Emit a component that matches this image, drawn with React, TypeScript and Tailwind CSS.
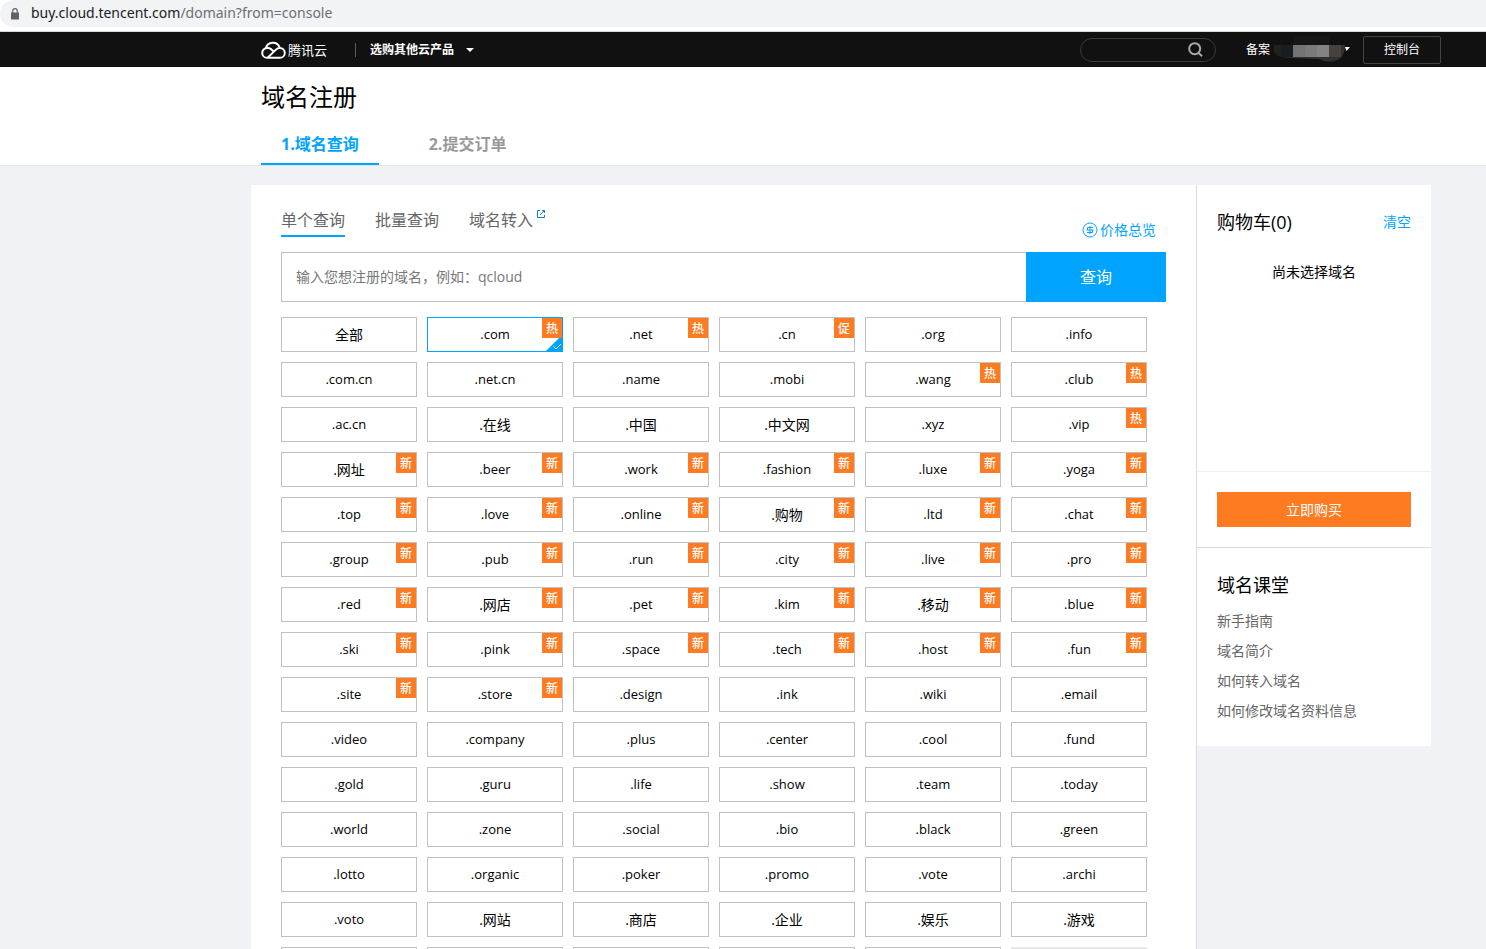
import React, { useState } from "react";

type Tag = "热" | "促" | "新";

const ROWS: string[] = [
  "全部|.com:热|.net:热|.cn:促|.org|.info",
  ".com.cn|.net.cn|.name|.mobi|.wang:热|.club:热",
  ".ac.cn|.在线|.中国|.中文网|.xyz|.vip:热",
  ".网址:新|.beer:新|.work:新|.fashion:新|.luxe:新|.yoga:新",
  ".top:新|.love:新|.online:新|.购物:新|.ltd:新|.chat:新",
  ".group:新|.pub:新|.run:新|.city:新|.live:新|.pro:新",
  ".red:新|.网店:新|.pet:新|.kim:新|.移动:新|.blue:新",
  ".ski:新|.pink:新|.space:新|.tech:新|.host:新|.fun:新",
  ".site:新|.store:新|.design|.ink|.wiki|.email",
  ".video|.company|.plus|.center|.cool|.fund",
  ".gold|.guru|.life|.show|.team|.today",
  ".world|.zone|.social|.bio|.black|.green",
  ".lotto|.organic|.poker|.promo|.vote|.archi",
  ".voto|.网站|.商店|.企业|.娱乐|.游戏",
];

const SUFFIXES = ROWS.flatMap((row) =>
  row.split("|").map((cell) => {
    const [name, tag] = cell.split(":");
    return { name, tag: tag as Tag | undefined };
  }),
);

const LESSONS = ["新手指南", "域名简介", "如何转入域名", "如何修改域名资料信息"];

function AddressBar() {
  return (
    <div className="shrink-0 border-b border-[#d5d8dc] bg-white pb-1">
      <div className="flex h-[27px] items-center rounded-l-full bg-[#f1f3f4] pl-[11px]">
        <svg width="8" height="12" viewBox="0 0 8 12" aria-hidden="true">
          <path d="M0 4.5h8v7H0z" fill="#5f6368" />
          <path d="M1.7 5V3a2.3 2.3 0 0 1 4.6 0v2" fill="none" stroke="#5f6368" strokeWidth="1.2" />
        </svg>
        <span className="ml-3 pb-[2px] font-['Noto_Sans',sans-serif] text-[14px] leading-5 text-[#202124]">
          buy.cloud.tencent.com<span className="text-[#6b6f74]">/domain?from=console</span>
        </span>
      </div>
    </div>
  );
}

function CloudLogo() {
  return (
    <svg width="25" height="18" viewBox="0 0 25 18" fill="none" stroke="#fff" strokeWidth="2" aria-hidden="true">
      <path d="M4.9 7.1A7.2 7.2 0 0 1 18.6 6.3" />
      <path d="M12.6 10.6 9.9 8.1A5 5 0 0 0 6.2 7C3.300 7 1.200 9.200 1.200 11.900S3.300 16.800 6.200 16.800H18.700C21.700 16.800 23.800 14.600 23.800 11.900S21.600 7 18.800 7C17.200 7 16 7.600 15 8.600L6.700 16.600" />
    </svg>
  );
}

function AccountMosaic() {
  return (
    <svg width="72" height="28" viewBox="0 0 72 28" aria-label="账号" role="img">
      <path d="M2 8Q-1 14 4 19Q8 22 20 22L46 23Q56 28 64 24Q73 20 72 8Z" fill="#303030" />
      <path d="M2 0h70v9H2z" fill="#111" />
      <path d="M20 0h36v9H20z" fill="#161616" />
      <path d="M2 9h6v11H5Q0 15 2 9Z" fill="#24211c" />
      <path d="M8 9h12v12H8z" fill="#191d21" />
      <path d="M20 9h12v12H20z" fill="#727474" />
      <path d="M32 9h12v12H32z" fill="#7b7a7b" />
      <path d="M44 9h12v12H44z" fill="#838482" />
      <path d="M56 9h12v12H56z" fill="#49413b" />
    </svg>
  );
}

function TopBar() {
  return (
    <header className="flex h-[35px] items-center bg-[#111] pr-[45px] pl-[261px] text-[12px] text-white">
      <a href="#home" className="flex items-center gap-[2px]">
        <CloudLogo />
        <span className="text-[13px] leading-5">腾讯云</span>
      </a>
      <span className="ml-7 h-[14px] w-px bg-[#5a5a5a]" />
      <button type="button" className="ml-[14px] flex items-center gap-3 font-bold">
        选购其他云产品
        <svg width="8" height="4" viewBox="0 0 8 4" aria-hidden="true">
          <path d="M0 0h8L4 4z" fill="#fff" />
        </svg>
      </button>
      <label className="ml-auto flex h-6 w-[136px] items-center rounded-full border border-[#3a3a3a] pr-3">
        <input aria-label="搜索" className="h-5 w-0 flex-1 bg-transparent pl-3 outline-none" />
        <svg width="15" height="15" viewBox="0 0 15 15" fill="none" stroke="#a9a9a9" strokeWidth="2" aria-hidden="true">
          <circle cx="6.700" cy="6.700" r="5.500" />
          <path d="m10.300 10.600 3.700 3.700" />
        </svg>
      </label>
      <a href="#beian" className="ml-[30px]">备案</a>
      <button type="button" className="ml-[3px] flex items-center" aria-label="账号菜单">
        <AccountMosaic />
        <svg width="5" height="5" viewBox="0 0 5 5" aria-hidden="true">
          <path d="M0 0h5L1.500 4z" fill="#fff" />
        </svg>
      </button>
      <a
        href="#console"
        className="ml-[13px] flex h-7 w-[78px] items-center justify-center rounded-[2px] border border-[#444]"
      >
        控制台
      </a>
    </header>
  );
}

function PageTitle() {
  return (
    <div className="border-b border-[#e2e7ec] bg-white pl-[261px]">
      <h1 className="pt-3 text-[24px] leading-9 text-black">域名注册</h1>
      <ol className="mt-[11px] flex gap-[30px] text-[16px] leading-[37px] font-bold">
        <li className="border-b-2 border-[#00a4ff] px-5 text-[#00a4ff]" aria-current="step">1.域名查询</li>
        <li className="px-5 text-[#999]">2.提交订单</li>
      </ol>
    </div>
  );
}

function SuffixButton({
  name,
  tag,
  selected,
  onToggle,
}: {
  name: string;
  tag?: Tag;
  selected: boolean;
  onToggle: () => void;
}) {
  const latin = /^[.a-z]+$/.test(name);
  return (
    <button
      type="button"
      aria-pressed={selected}
      onClick={onToggle}
      className={`relative h-[35px] border bg-white text-black ${latin ? "text-[13px]" : "text-[14px]"} ${
        selected ? "border-[#00a4ff]" : "border-[#c1c1c1]"
      }`}
    >
      {name}
      {selected && (
        <svg className="absolute right-0 bottom-0" width="16" height="16" viewBox="0 0 16 16" aria-hidden="true">
          <path d="M16 0v16H0z" fill="#00a4ff" />
          <path d="m7.500 11.500 2.500 2.500 5-5" fill="none" stroke="#fff" strokeWidth="1" />
        </svg>
      )}
      {tag && (
        <span className="absolute top-0 right-0 h-5 w-5 bg-[#ff7b22] text-center text-[12px] leading-[22px] font-medium text-white">
          {tag}
        </span>
      )}
    </button>
  );
}

function QueryPanel() {
  const [selected, setSelected] = useState<string[]>([".com"]);
  const toggle = (name: string) =>
    setSelected((old) => (old.includes(name) ? old.filter((n) => n !== name) : [...old, name]));

  return (
    <main className="min-w-0 flex-1 border-r border-[#d9dadb] bg-white px-[30px] pb-8">
      <div className="flex items-start pt-5 text-[16px] leading-[30px] text-[#666]">
        <nav className="flex gap-[30px]">
          <a href="#single" className="border-b-2 border-[#00a4ff]">单个查询</a>
          <a href="#batch">批量查询</a>
          <a href="#transfer" className="flex items-start gap-[3px]">
            域名转入
            <svg className="mt-1" width="10" height="10" viewBox="0 0 10 10" fill="none" stroke="#0d7fd6" aria-hidden="true">
              <path d="M4 1.500H1.500v7h7V6M6 1.500h2.500V4M8.500 1.500 4 6" />
            </svg>
          </a>
        </nav>
        <a href="#price" className="mt-[10px] mr-[10px] ml-auto flex items-center gap-[2px] text-[14px] text-[#00a4ff]">
          <svg width="16" height="16" viewBox="0 0 16 16" fill="none" stroke="#00a4ff" aria-hidden="true">
            <circle cx="8" cy="8" r="7" />
            <path d="M11 5.500H5.500v2.500M5 10.500h5.500v-2.500M4.500 8h7M8 4v8" />
          </svg>
          价格总览
        </a>
      </div>
      <form className="mt-[7px] flex h-[50px]" onSubmit={(e) => e.preventDefault()}>
        <input
          aria-label="域名"
          placeholder="输入您想注册的域名，例如：qcloud"
          className="min-w-0 flex-1 border border-r-0 border-[#c1c1c1] pb-[2px] pl-[14px] text-[14px] text-black outline-none placeholder:text-[#777]"
        />
        <button type="submit" className="w-[140px] bg-[#00a4ff] text-[16px] text-white">查询</button>
      </form>
      <div className="mt-[15px] mr-[19px] grid grid-cols-6 gap-[10px]">
        {SUFFIXES.map((s) => (
          <SuffixButton
            key={s.name}
            name={s.name}
            tag={s.tag}
            selected={selected.includes(s.name)}
            onToggle={() => toggle(s.name)}
          />
        ))}
        <span className="h-[35px] border border-[#c1c1c1]" />
        <span className="h-[35px] border border-[#c1c1c1]" />
        <span className="h-[35px] border border-[#c1c1c1]" />
        <span className="h-[35px] border border-[#c1c1c1]" />
        <span className="h-[35px] border border-[#c1c1c1]" />
        <span className="h-[35px] bg-[#e8e8e8]" />
      </div>
    </main>
  );
}

function Sidebar() {
  return (
    <aside className="w-[234px] shrink-0 self-start bg-white">
      <section className="h-[287px] border-b border-[#f0f0f0] px-5 pt-[22px]">
        <div className="flex items-center justify-between leading-[30px]">
          <h2 className="text-[18px] text-black">购物车(0)</h2>
          <button type="button" className="text-[14px] text-[#00a4ff]">清空</button>
        </div>
        <p className="mt-5 text-center text-[14px] leading-[30px] text-black">尚未选择域名</p>
      </section>
      <div className="border-b border-[#d9dadb] p-5">
        <button type="button" className="h-[35px] w-full bg-[#ff7b22] text-[14px] text-white">立即购买</button>
      </div>
      <section className="px-5 pt-[22px] pb-5">
        <h2 className="text-[18px] leading-[30px] text-black">域名课堂</h2>
        <ul className="mt-[6px] text-[14px] leading-[30px] text-[#666]">
          {LESSONS.map((l) => (
            <li key={l}>
              <a href="#lesson">{l}</a>
            </li>
          ))}
        </ul>
      </section>
    </aside>
  );
}

export default function App() {
  return (
    <div className="flex h-screen flex-col bg-[#f0f2f6] font-['Open_Sans','Noto_Sans_CJK_SC',sans-serif]">
      <AddressBar />
      <div className="min-h-0 flex-1 overflow-y-auto [scrollbar-width:none]">
        <TopBar />
        <PageTitle />
        <div className="mt-[19px] flex pr-[55px] pl-[251px]">
          <QueryPanel />
          <Sidebar />
        </div>
      </div>
    </div>
  );
}
